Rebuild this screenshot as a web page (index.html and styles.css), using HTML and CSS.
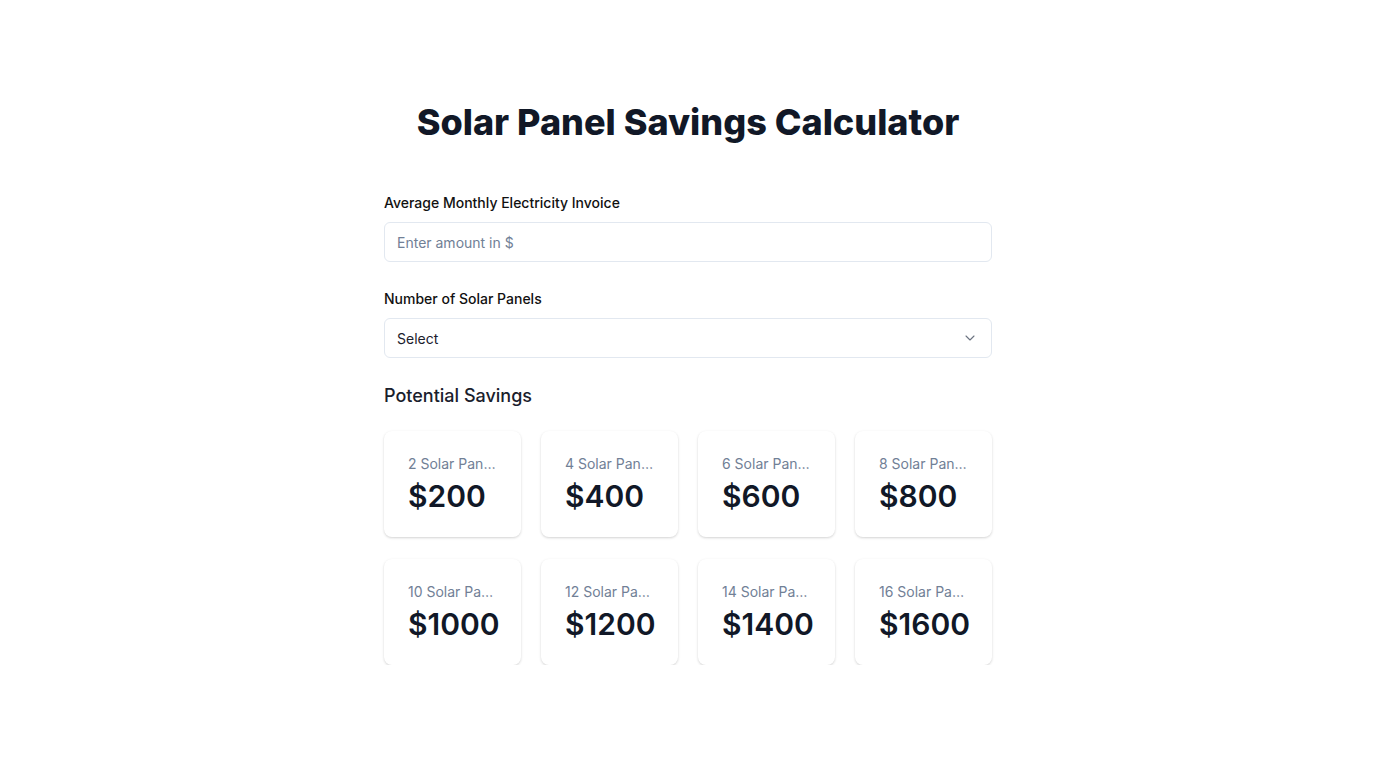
FILE: index.html
```html
<!DOCTYPE html>
<html lang="en">
<head>
<meta charset="utf-8">
<title>Solar Panel Savings Calculator</title>
<link rel="stylesheet" href="styles.css">
</head>
<body>
<main class="container">
  <h1 class="title">Solar Panel Savings Calculator</h1>
  <div class="field">
    <label class="label" for="amount">Average Monthly Electricity Invoice</label>
    <input class="input" id="amount" type="text" placeholder="Enter amount in $">
  </div>
  <div class="field">
    <label class="label" for="panels">Number of Solar Panels</label>
    <div class="select-wrap">
      <select class="select" id="panels">
        <option>Select</option>
      </select>
      <svg class="chevron" viewBox="0 0 24 24" width="16" height="16" aria-hidden="true"><path d="M6 9l6 6 6-6" fill="none" stroke="currentColor" stroke-width="1.6" stroke-linecap="round" stroke-linejoin="round"/></svg>
    </div>
  </div>
  <h2 class="subtitle">Potential Savings</h2>
  <div class="grid">
    <div class="card"><div class="card-label">2 Solar Panels</div><div class="card-value">$200</div></div>
    <div class="card"><div class="card-label">4 Solar Panels</div><div class="card-value">$400</div></div>
    <div class="card"><div class="card-label">6 Solar Panels</div><div class="card-value">$600</div></div>
    <div class="card"><div class="card-label">8 Solar Panels</div><div class="card-value">$800</div></div>
    <div class="card"><div class="card-label">10 Solar Panels</div><div class="card-value">$1000</div></div>
    <div class="card"><div class="card-label">12 Solar Panels</div><div class="card-value">$1200</div></div>
    <div class="card"><div class="card-label">14 Solar Panels</div><div class="card-value">$1400</div></div>
    <div class="card"><div class="card-label">16 Solar Panels</div><div class="card-value">$1600</div></div>
  </div>
</main>
</body>
</html>
```

FILE: styles.css
```css
* { box-sizing: border-box; }
html, body { margin: 0; padding: 0; background: #ffffff; }
body {
  font-family: Inter, "Noto Sans", sans-serif;
  color: #1a202c;
}
.container {
  width: 608px;
  margin: 0 auto;
  padding-top: 100px;
}
.title {
  margin: 0 0 48px;
  font-size: 36px;
  line-height: 44px;
  font-weight: 800;
  text-align: center;
  color: #111827;
}
.field { margin-bottom: 26px; }
.label {
  display: block;
  font-size: 14px;
  line-height: 21px;
  font-weight: 500;
  color: #111111;
  margin-bottom: 9px;
}
.input, .select {
  display: block;
  width: 100%;
  height: 40px;
  border: 1px solid #e2e8f0;
  border-radius: 6px;
  padding: 0 12px;
  font-family: inherit;
  font-size: 14px;
  color: #1a202c;
  background: #ffffff;
  outline: none;
}
.input::placeholder { color: #718096; }
.select-wrap { position: relative; }
.select {
  appearance: none;
  -webkit-appearance: none;
  color: #1a202c;
}
.chevron {
  position: absolute;
  right: 14px;
  top: 12px;
  color: #6b7280;
  pointer-events: none;
}
.subtitle {
  margin: -2px 0 22px;
  font-size: 18px;
  line-height: 27px;
  font-weight: 500;
  color: #1a202c;
}
.grid {
  display: grid;
  grid-template-columns: repeat(4, 137px);
  column-gap: 20px;
  row-gap: 22px;
}
.card {
  height: 106px;
  padding: 23px 24px;
  border-radius: 8px;
  background: #ffffff;
  box-shadow: 0 1px 3px rgba(0,0,0,0.12), 0 1px 2px rgba(0,0,0,0.06);
}
.card-label {
  font-size: 14px;
  line-height: 20px;
  color: #718096;
  white-space: nowrap;
  overflow: hidden;
  text-overflow: ellipsis;
}
.card-value {
  margin-top: 2px;
  font-size: 30px;
  line-height: 40px;
  font-weight: 600;
  color: #111827;
}
```
